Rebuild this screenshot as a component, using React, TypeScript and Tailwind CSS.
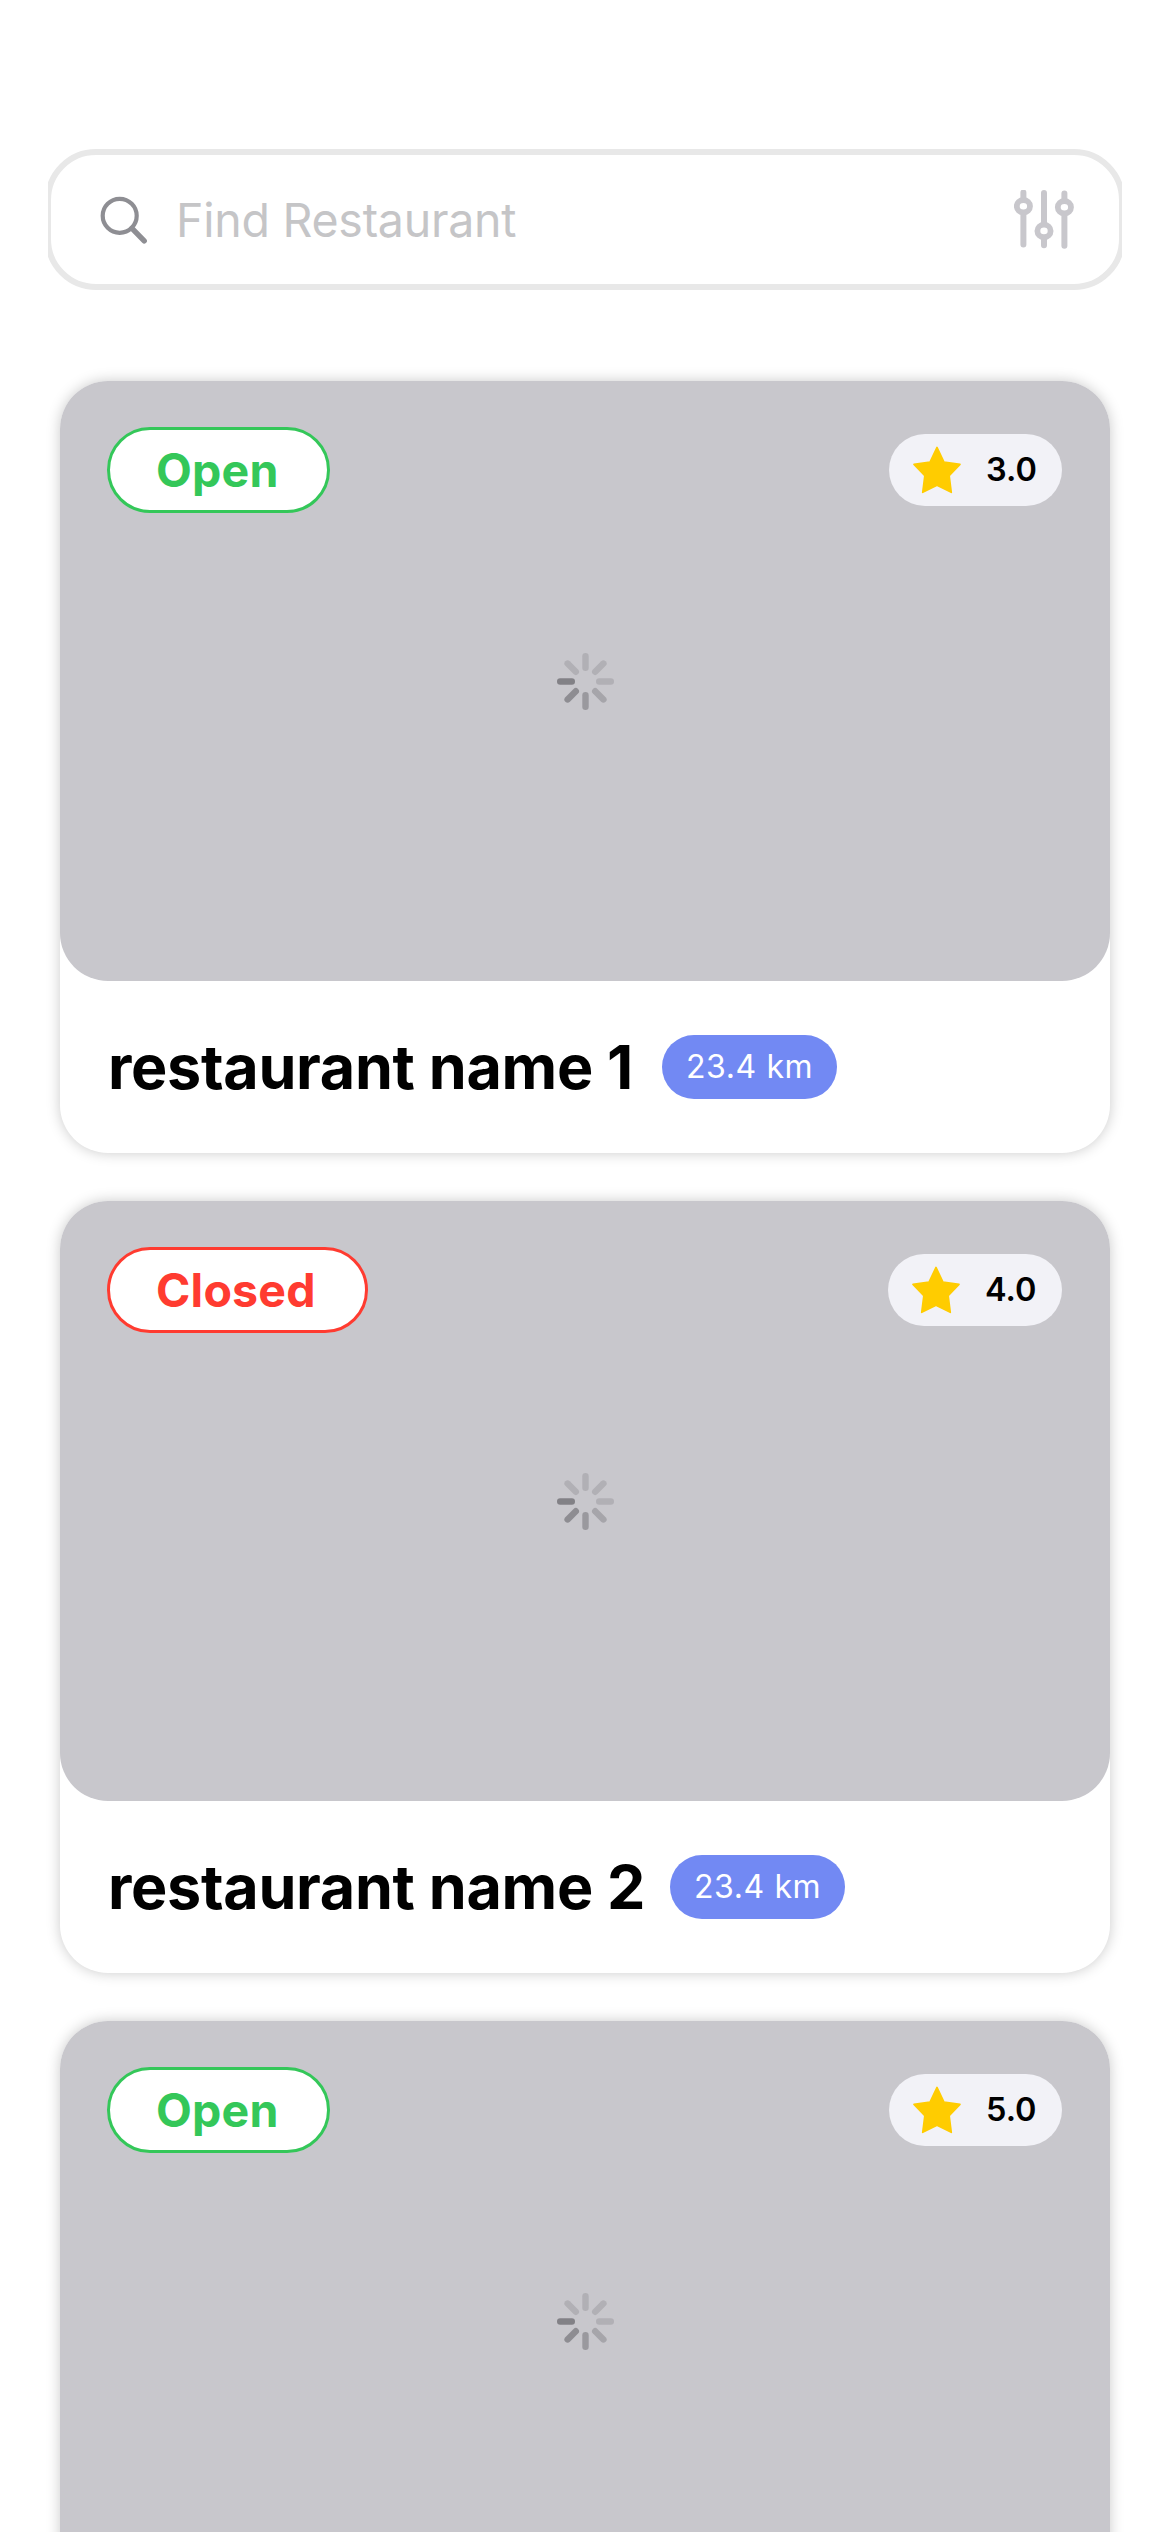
type Restaurant = {
  id: number;
  open: boolean;
  rating: string;
  ratingWidth: string;
  name?: string;
  nameWidth?: string;
  distance?: string;
};

const restaurants: Restaurant[] = [
  { id: 1, open: true, rating: "3.0", ratingWidth: "w-[173px]", name: "restaurant name 1", nameWidth: "w-[530px]", distance: "23.4 km" },
  { id: 2, open: false, rating: "4.0", ratingWidth: "w-[174px]", name: "restaurant name 2", nameWidth: "w-[538px]", distance: "23.4 km" },
  { id: 3, open: true, rating: "5.0", ratingWidth: "w-[173px]" },
];

function SearchIcon() {
  return (
    <svg className="h-[48px] w-[48px] shrink-0" viewBox="0 0 48 48" fill="none" stroke="#8e8e93">
      <circle cx="19.7" cy="19.8" r="17" strokeWidth="4.2" />
      <path d="M32 32.3L44.2 44.9" strokeWidth="5.4" strokeLinecap="round" />
    </svg>
  );
}

function FilterIcon() {
  return (
    <svg className="h-[60px] w-[60px] shrink-0" viewBox="0 0 60 60" fill="none" stroke="#c8c7cc" strokeWidth="6" strokeLinecap="round">
      <path d="M9.4 2.5v6M9.4 25v29.5M30 3v30M30 49v6.3M50.4 3.6v6M50.4 26v29.8" />
      <ellipse cx="9.4" cy="16.2" rx="6.6" ry="6.2" strokeWidth="5.8" />
      <ellipse cx="30" cy="40.9" rx="6.6" ry="6.2" strokeWidth="5.8" />
      <ellipse cx="50.4" cy="17.2" rx="6.6" ry="6.2" strokeWidth="5.8" />
    </svg>
  );
}

function StarIcon() {
  return (
    <svg className="h-[48px] w-[48px] shrink-0" viewBox="0 0 48 48" fill="#ffcc00" stroke="#ffcc00" strokeWidth="1.6" strokeLinejoin="round">
      <path d="M24 1.4L31 16L47 18.4L36.2 29.6L38.3 46.4L24 39.2L9.7 46.4L11.8 29.6L1 18.4L17 16Z" />
    </svg>
  );
}

const spokes = [
  { angle: 0, color: "#b1b0b5" },
  { angle: 45, color: "#b1b0b5" },
  { angle: 90, color: "#b1b0b5" },
  { angle: 135, color: "#a6a5aa" },
  { angle: 180, color: "#9a999e" },
  { angle: 225, color: "#8e8d92" },
  { angle: 270, color: "#828186" },
  { angle: 315, color: "#b1b0b5" },
];

function Spinner() {
  return (
    <svg className="h-[60px] w-[60px]" viewBox="-30 -30 60 60">
      {spokes.map(({ angle, color }) => (
        <rect key={angle} x="-3.2" y="-28.5" width="6.4" height="18" rx="3.2" fill={color} transform={`translate(0.5 -0.5) rotate(${angle})`} />
      ))}
    </svg>
  );
}

function StatusPill({ open }: { open: boolean }) {
  return (
    <div
      className={
        "flex h-[86px] items-center rounded-full border-[3px] bg-white pl-[46px] text-[46.5px] font-bold tracking-[0.2px] " +
        (open ? "w-[223px] border-[#34c759] text-[#34c759]" : "w-[261px] border-[#ff3b30] text-[#ff3b30]")
      }
    >
      {open ? "Open" : "Closed"}
    </div>
  );
}

function RestaurantCard({ open, rating, ratingWidth, name, nameWidth, distance }: Restaurant) {
  return (
    <article className="h-[772px] shrink-0 rounded-[48px] bg-white shadow-[0_0_14px_rgba(0,0,0,0.21)]">
      <div className="flex h-[600px] flex-col rounded-[48px] bg-[#c8c7cc] pl-[47px] pr-[48px] pt-[46px]">
        <div className="flex items-center justify-between">
          <StatusPill open={open} />
          <div className={`flex h-[72px] items-center gap-[25px] rounded-full bg-[#f2f2f7] pl-[24px] text-[32.5px] font-semibold ${ratingWidth}`}>
            <StarIcon />
            {rating}
          </div>
        </div>
        <div className="mt-[139px] flex justify-center pl-px">
          <Spinner />
        </div>
      </div>
      {name && (
        <div className="flex h-[172px] items-center gap-[24px] pl-[48px]">
          <h2 className={`text-[61px] font-bold leading-none tracking-[-0.3px] ${nameWidth}`}>{name}</h2>
          <span className="flex h-[64px] w-[175px] items-center rounded-full bg-[#7289f3] pl-[24px] text-[32px] tracking-[0.6px] text-white">
            {distance}
          </span>
        </div>
      )}
    </article>
  );
}

export default function App() {
  return (
    <main className="flex h-[2532px] w-[1170px] flex-col overflow-hidden bg-white pt-[149px] font-['Inter',sans-serif] leading-none whitespace-nowrap text-black">
      <div className="mx-[48px] shrink-0 overflow-hidden">
        <div className="-mx-[3px] flex h-[141px] items-center rounded-[51px] border-[6px] border-[#e8e8e8] bg-white pl-[49px] pr-[45px]">
          <SearchIcon />
          <span className="ml-[28px] flex-1 pt-[2px] text-[46.5px] tracking-[-0.25px] text-[#c5c5c7]">Find Restaurant</span>
          <FilterIcon />
        </div>
      </div>
      <section className="mt-[91px] flex flex-col gap-[48px] px-[60px]">
        {restaurants.map((r) => (
          <RestaurantCard key={r.id} {...r} />
        ))}
      </section>
    </main>
  );
}
